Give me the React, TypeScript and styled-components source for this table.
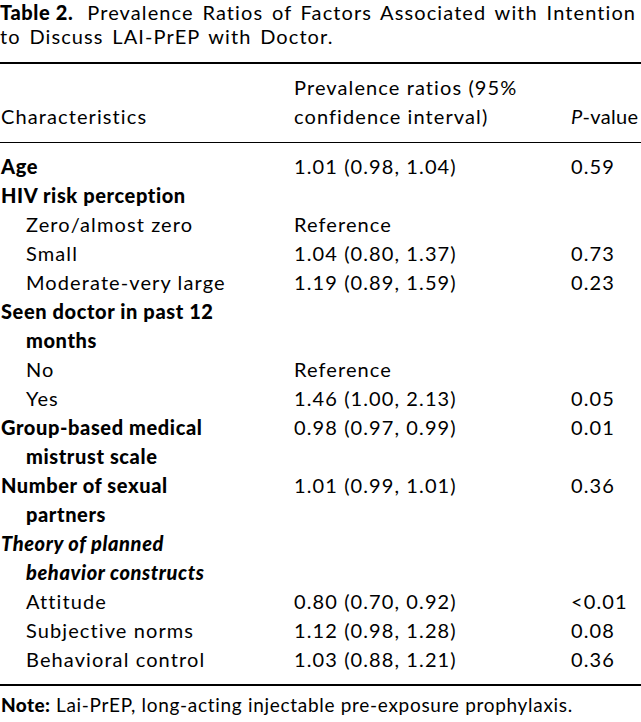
import React from "react";
import styled, { createGlobalStyle } from "styled-components";

const Global = createGlobalStyle`
  html, body { margin: 0; padding: 0; background: #fff; }
  body { font-family: Lato, "Open Sans", "Liberation Sans", sans-serif; color: #000; }
`;

const Page = styled.div`
  width: 641px;
  overflow: hidden;
  font-size: 20px;
  letter-spacing: 1.1px;
`;

const Caption = styled.div`
  line-height: 24px;
  padding-bottom: 14px;
  white-space: nowrap;
  word-spacing: 2.5px;
`;

const CaptionLabel = styled.span`
  font-weight: 900;
  letter-spacing: 0.6px;
  word-spacing: 0;
  margin-right: 14px;
`;

const Rule = styled.div<{ $w: number }>`
  height: ${(p) => p.$w}px;
  background: #000;
`;

const Grid = styled.div<{ $pt: number; $pb: number }>`
  display: grid;
  grid-template-columns: 293px 277px 1fr;
  padding: ${(p) => p.$pt}px 0 ${(p) => p.$pb}px;
  line-height: 29px;
  white-space: nowrap;
`;

const HeadCell = styled.div<{ $tight?: boolean }>`
  align-self: end;
  padding-left: 1px;
  letter-spacing: ${(p) => (p.$tight ? 0.3 : 1.1)}px;
`;

const Label = styled.div<{ $indent?: boolean; $bold?: boolean; $italic?: boolean }>`
  padding-left: 26px;
  text-indent: ${(p) => (p.$indent ? 0 : -25)}px;
  font-weight: ${(p) => (p.$bold ? 900 : 400)};
  letter-spacing: ${(p) => (p.$bold ? 0.6 : 1.1)}px;
  font-style: ${(p) => (p.$italic ? "italic" : "normal")};
`;

const Cell = styled.div`
  padding-left: 1px;
`;

const Note = styled.div`
  padding-top: 5px;
  line-height: 28px;
  padding-left: 1px;
  white-space: nowrap;
  font-size: 19px;
  letter-spacing: 0.7px;
`;

const Strong = styled.span`
  font-weight: 900;
  letter-spacing: 0.4px;
`;

type Row = {
  lines: string[];
  kind: "head" | "sub" | "italic";
  pr?: string;
  p?: string;
};

const rows: Row[] = [
  { lines: ["Age"], kind: "head", pr: "1.01 (0.98, 1.04)", p: "0.59" },
  { lines: ["HIV risk perception"], kind: "head" },
  { lines: ["Zero/almost zero"], kind: "sub", pr: "Reference" },
  { lines: ["Small"], kind: "sub", pr: "1.04 (0.80, 1.37)", p: "0.73" },
  { lines: ["Moderate-very large"], kind: "sub", pr: "1.19 (0.89, 1.59)", p: "0.23" },
  { lines: ["Seen doctor in past 12", "months"], kind: "head" },
  { lines: ["No"], kind: "sub", pr: "Reference" },
  { lines: ["Yes"], kind: "sub", pr: "1.46 (1.00, 2.13)", p: "0.05" },
  { lines: ["Group-based medical", "mistrust scale"], kind: "head", pr: "0.98 (0.97, 0.99)", p: "0.01" },
  { lines: ["Number of sexual", "partners"], kind: "head", pr: "1.01 (0.99, 1.01)", p: "0.36" },
  { lines: ["Theory of planned", "behavior constructs"], kind: "italic" },
  { lines: ["Attitude"], kind: "sub", pr: "0.80 (0.70, 0.92)", p: "<0.01" },
  { lines: ["Subjective norms"], kind: "sub", pr: "1.12 (0.98, 1.28)", p: "0.08" },
  { lines: ["Behavioral control"], kind: "sub", pr: "1.03 (0.88, 1.21)", p: "0.36" },
];

export default function App() {
  return (
    <Page>
      <Global />
      <Caption>
        <CaptionLabel>Table 2.</CaptionLabel>Prevalence Ratios of Factors Associated with Intention
        <br />
        to Discuss LAI-PrEP with Doctor.
      </Caption>
      <Rule $w={2} />
      <Grid $pt={9} $pb={11}>
        <HeadCell>Characteristics</HeadCell>
        <HeadCell>
          Prevalence ratios (95%
          <br />
          confidence interval)
        </HeadCell>
        <HeadCell $tight>
          <i>P</i>-value
        </HeadCell>
      </Grid>
      <Rule $w={1} />
      <Grid $pt={9} $pb={10}>
        {rows.map((r, i) => (
          <React.Fragment key={i}>
            <Label
              $indent={r.kind === "sub"}
              $bold={r.kind !== "sub"}
              $italic={r.kind === "italic"}
            >
              {r.lines.map((l, j) => (
                <React.Fragment key={j}>
                  {j > 0 && <br />}
                  {l}
                </React.Fragment>
              ))}
            </Label>
            <Cell>{r.pr ?? ""}</Cell>
            <Cell>{r.p ?? ""}</Cell>
          </React.Fragment>
        ))}
      </Grid>
      <Rule $w={2} />
      <Note>
        <Strong>Note:</Strong> Lai-PrEP, long-acting injectable pre-exposure prophylaxis.
      </Note>
    </Page>
  );
}
